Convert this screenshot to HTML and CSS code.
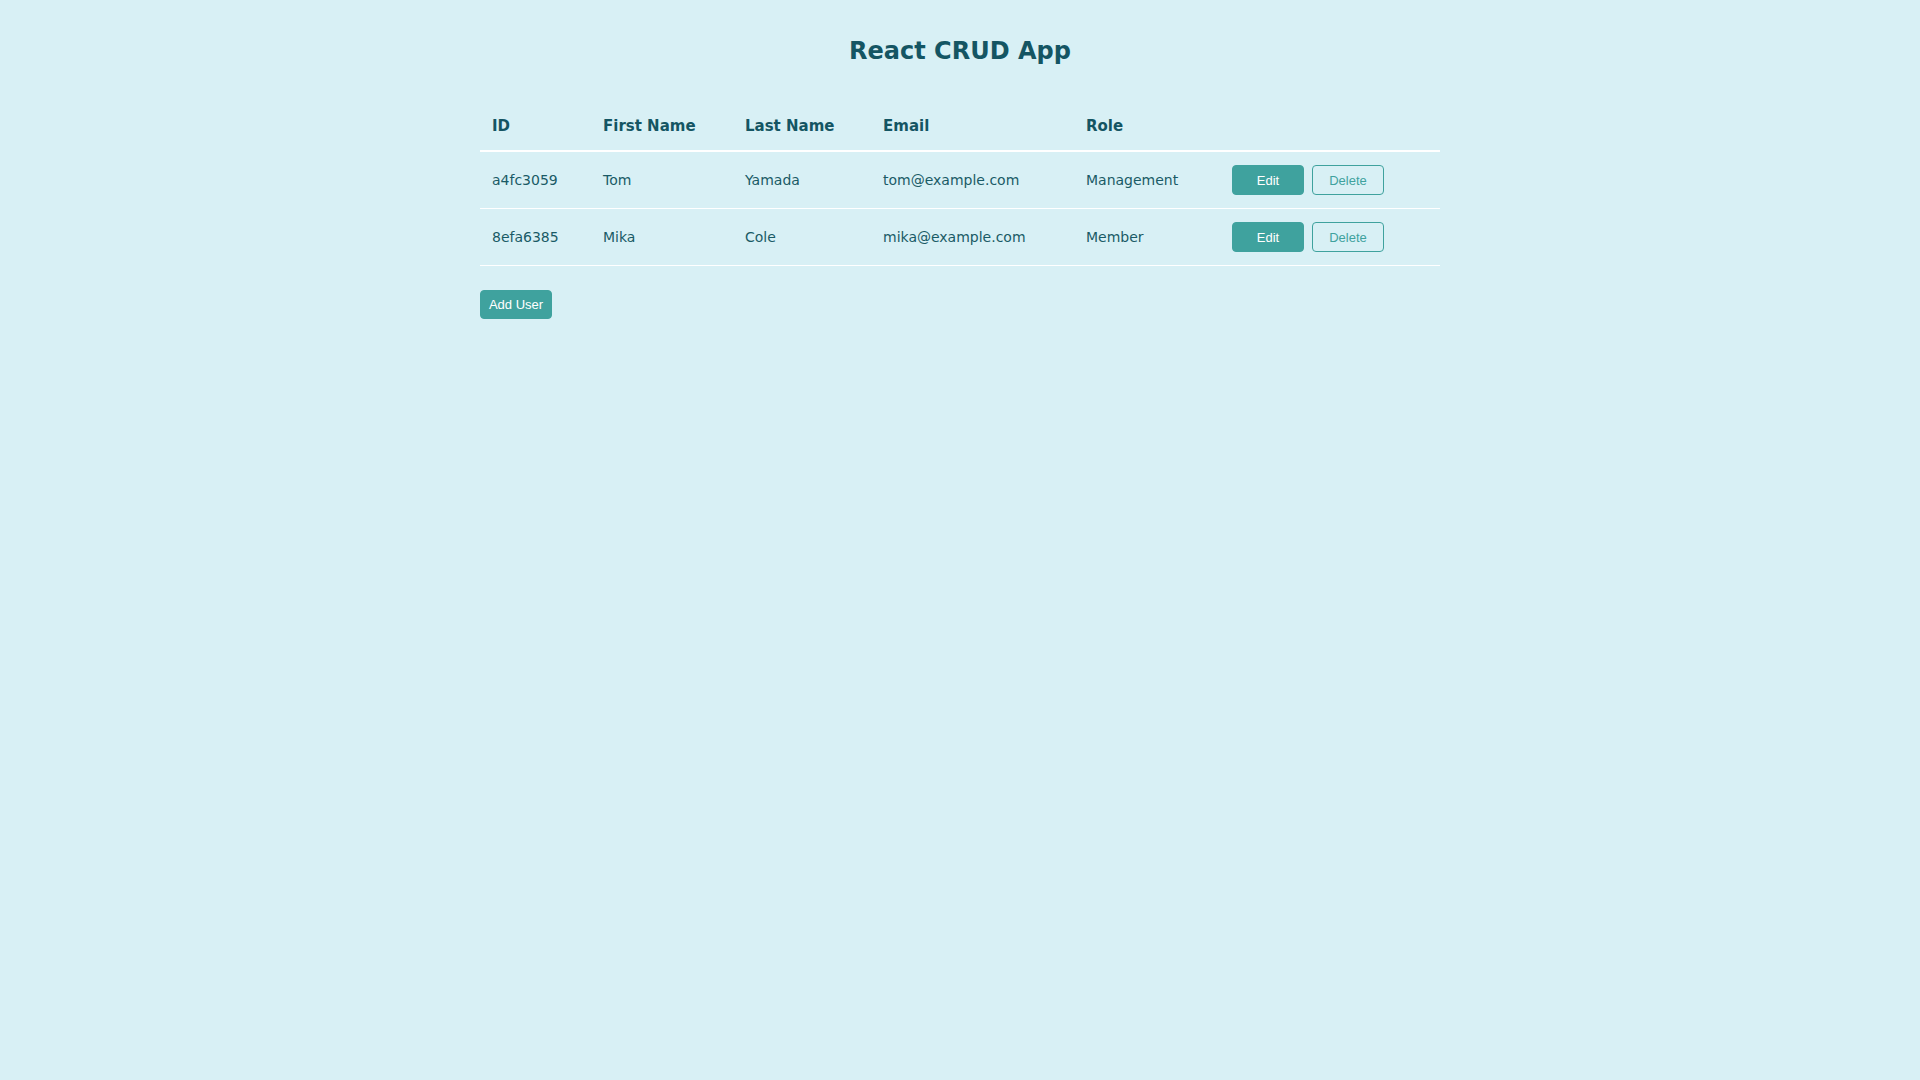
FILE: index.html
```html
<!DOCTYPE html>
<html lang="en">
<head>
<meta charset="utf-8">
<title>React CRUD App</title>
<link rel="stylesheet" href="styles.css">
</head>
<body>
<div class="app">
  <h1 class="title">React CRUD App</h1>
  <table class="users">
    <thead>
      <tr>
        <th class="c-id">ID</th>
        <th class="c-first">First Name</th>
        <th class="c-last">Last Name</th>
        <th class="c-email">Email</th>
        <th class="c-role">Role</th>
        <th class="c-act"></th>
      </tr>
    </thead>
    <tbody>
      <tr>
        <td>a4fc3059</td>
        <td>Tom</td>
        <td>Yamada</td>
        <td>tom@example.com</td>
        <td>Management</td>
        <td><div class="actions"><button class="btn btn-solid">Edit</button><button class="btn btn-outline">Delete</button></div></td>
      </tr>
      <tr>
        <td>8efa6385</td>
        <td>Mika</td>
        <td>Cole</td>
        <td>mika@example.com</td>
        <td>Member</td>
        <td><div class="actions"><button class="btn btn-solid">Edit</button><button class="btn btn-outline">Delete</button></div></td>
      </tr>
    </tbody>
  </table>
  <button class="btn btn-solid btn-add">Add User</button>
</div>
</body>
</html>
```
FILE: styles.css
```css
html, body {
  margin: 0;
  padding: 0;
  background: #d8f0f5;
}
body {
  font-family: "DejaVu Sans", sans-serif;
  color: #1a5b66;
}
.app {
  width: 960px;
  margin: 0 auto;
  padding-top: 33px;
}
.title {
  margin: 0;
  font-size: 24px;
  line-height: 36px;
  font-weight: bold;
  text-align: center;
  color: #145563;
}
.users {
  margin-top: 35px;
  width: 960px;
  border-collapse: collapse;
  table-layout: fixed;
}
.users th {
  text-align: left;
  font-size: 15px;
  line-height: 20px;
  font-weight: bold;
  color: #145563;
  padding: 12px 12px 14px;
  border-bottom: 2px solid #ffffff;
}
.users td {
  font-size: 14px;
  line-height: 20px;
  padding: 13px 12px;
  border-bottom: 1px solid #ffffff;
  vertical-align: middle;
}
.c-id { width: 87px; }
.c-first { width: 118px; }
.c-last { width: 114px; }
.c-email { width: 179px; }
.c-role { width: 122px; }
.actions {
  display: flex;
  gap: 8px;
}
.btn {
  font-family: "Liberation Sans", Arial, sans-serif;
  font-size: 13px;
  width: 72px;
  height: 30px;
  flex-shrink: 0;
  border-radius: 4px;
  padding: 0;
  cursor: pointer;
  box-sizing: border-box;
}
.btn-solid {
  background: #3fa29e;
  color: #ffffff;
  border: 1px solid #3fa29e;
}
.btn-outline {
  background: transparent;
  color: #3fa29e;
  border: 1px solid #3fa29e;
}
.btn-add {
  margin-top: 24px;
  height: 29px;
}
```
